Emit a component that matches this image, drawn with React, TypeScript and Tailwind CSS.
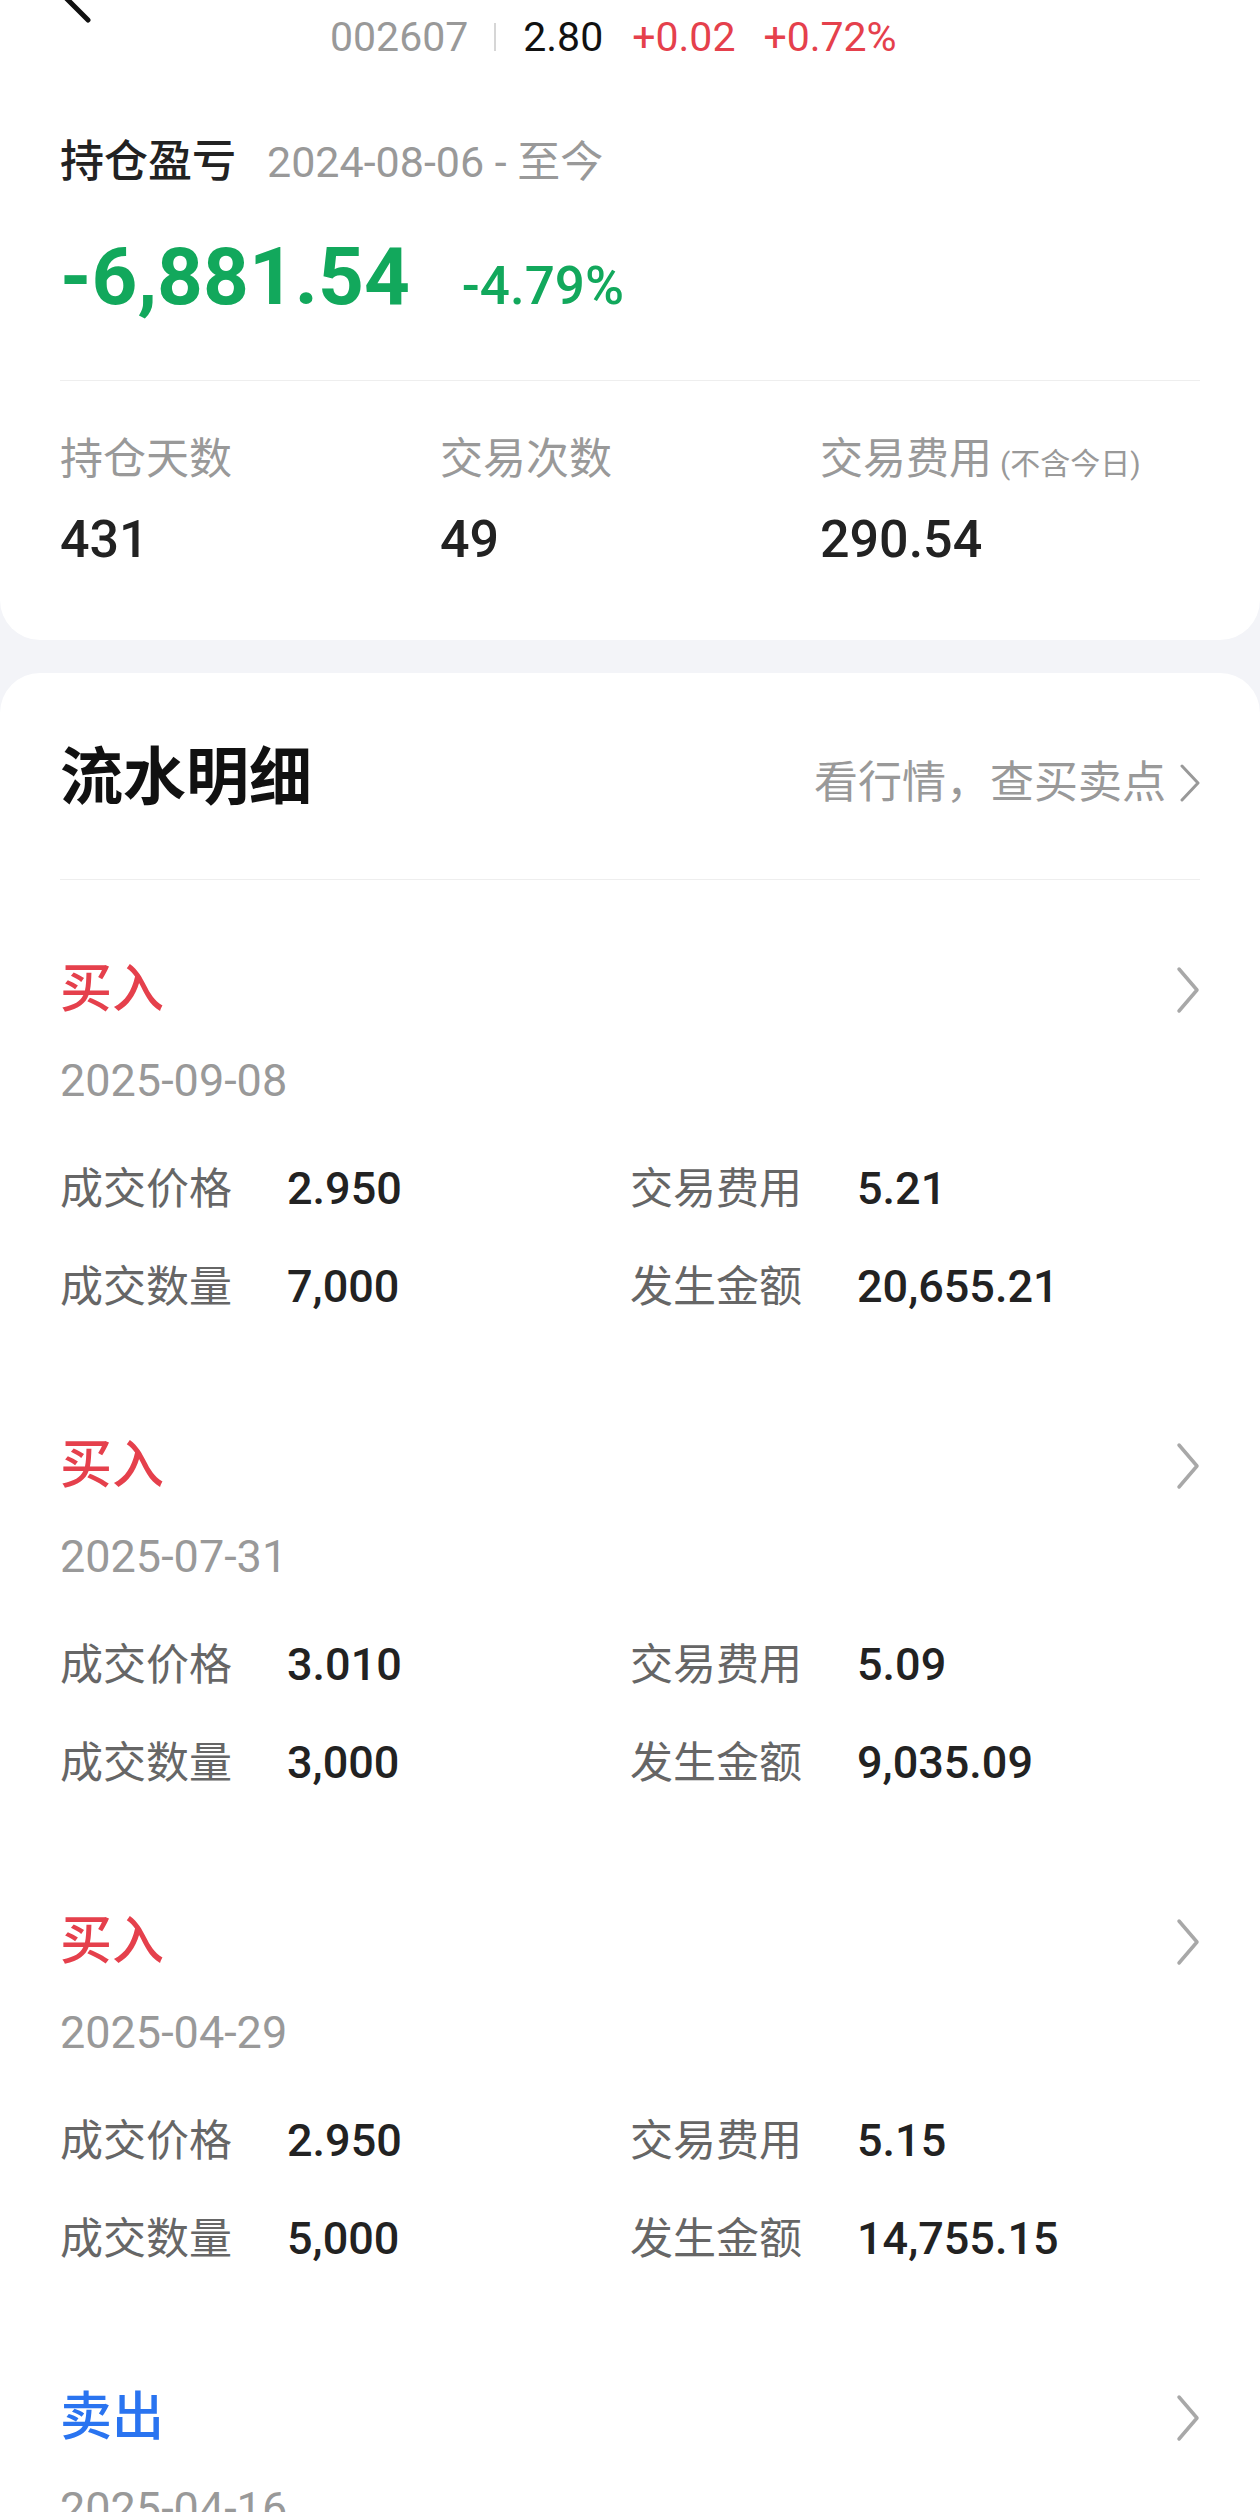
import { type FC } from 'react';

interface Entry {
  type: 'buy' | 'sell';
  date: string;
  price: string;
  fee: string;
  qty: string;
  amount: string;
}

const ENTRIES: Entry[] = [
  { type: 'buy', date: '2025-09-08', price: '2.950', fee: '5.21', qty: '7,000', amount: '20,655.21' },
  { type: 'buy', date: '2025-07-31', price: '3.010', fee: '5.09', qty: '3,000', amount: '9,035.09' },
  { type: 'buy', date: '2025-04-29', price: '2.950', fee: '5.15', qty: '5,000', amount: '14,755.15' },
  { type: 'sell', date: '2025-04-16', price: '3.120', fee: '12.48', qty: '10,000', amount: '31,187.52' },
];

const Chevron: FC<{ className?: string }> = ({ className }) => (
  <svg viewBox="0 0 24 48" className={className} fill="none" stroke="currentColor" strokeWidth="3.5" strokeLinecap="round" strokeLinejoin="round" aria-hidden="true">
    <path d="M3 3 L21 24 L3 45" />
  </svg>
);

const Cell: FC<{ label: string; value: string }> = ({ label, value }) => (
  <div className="flex items-center leading-[50px]">
    <span className="w-[227px] text-[43px] text-[#666]">{label}</span>
    <span className="text-[45px] font-medium text-[#222]">{value}</span>
  </div>
);

const EntryItem: FC<{ entry: Entry }> = ({ entry }) => (
  <div className="pb-[124px]">
    <div className="flex h-[60px] items-center justify-between">
      <span className={entry.type === 'buy' ? 'text-[52px] font-medium text-[#e5404c]' : 'text-[52px] font-medium text-[#2a74f0]'}>
        {entry.type === 'buy' ? '买入' : '卖出'}
      </span>
      <Chevron className="h-[48px] w-[24px] text-[#a8a8a8]" />
    </div>
    <div className="mt-[36px] text-[45px] leading-[50px] text-[#999]">{entry.date}</div>
    <div className="mt-[58px] grid grid-cols-2">
      <Cell label="成交价格" value={entry.price} />
      <Cell label="交易费用" value={entry.fee} />
    </div>
    <div className="mt-[48px] grid grid-cols-2">
      <Cell label="成交数量" value={entry.qty} />
      <Cell label="发生金额" value={entry.amount} />
    </div>
  </div>
);

const App: FC = () => {
  return (
    <div className="relative h-[2512px] w-[1260px] overflow-hidden bg-[#f3f4f8] font-['Roboto','Noto_Sans_CJK_SC',sans-serif]">
      {/* back arrow, mostly scrolled off */}
      <svg className="absolute left-[50px] top-0 h-[40px] w-[50px]" viewBox="0 0 50 40" fill="none" stroke="#111" strokeWidth="5" strokeLinecap="round" aria-hidden="true">
        <path d="M14 -4 L38 20" />
      </svg>

      <div className="rounded-b-[40px] bg-white px-[60px] pb-[70px]">
        <div className="flex h-[74px] items-center pl-[270px] text-[41px] leading-[50px]">
          <span className="text-[#999]">002607</span>
          <span className="ml-[26px] h-[28px] w-[2px] bg-[#d6d6d6]" />
          <span className="ml-[27px] text-[#111]">2.80</span>
          <span className="ml-[29px] text-[#e5404c]">+0.02</span>
          <span className="ml-[28px] text-[#e5404c]">+0.72%</span>
        </div>

        <div className="mt-[58px] flex items-center leading-[60px]">
          <span className="text-[44px] font-medium text-[#222]">持仓盈亏</span>
          <span className="ml-[31px] text-[43px] text-[#999]">2024-08-06 - 至今</span>
        </div>

        <div className="mt-[40px] flex h-[90px] items-baseline leading-[90px]">
          <span className="text-[80px] font-bold text-[#12a85c]">-6,881.54</span>
          <span className="ml-[52px] text-[53px] font-medium text-[#12a85c]">-4.79%</span>
        </div>

        <div className="mt-[58px] h-px bg-[#eeeeee]" />

        <div className="mt-[53px] grid grid-cols-3">
          {[
            { label: '持仓天数', value: '431' },
            { label: '交易次数', value: '49' },
            { label: '交易费用', value: '290.54', note: '(不含今日)' },
          ].map((s) => (
            <div key={s.label}>
              <div className="flex h-[50px] items-baseline leading-[50px]">
                <span className="text-[43px] text-[#999]">{s.label}</span>
                {s.note && <span className="ml-[8px] text-[30px] text-[#999]">{s.note}</span>}
              </div>
              <div className="mt-[26px] text-[52px] font-medium leading-[60px] text-[#222]">{s.value}</div>
            </div>
          ))}
        </div>
      </div>

      <div className="mt-[33px] rounded-t-[40px] bg-white px-[60px] pt-[65px]">
        <div className="flex h-[80px] items-center justify-between">
          <span className="text-[63px] font-bold text-[#111]">流水明细</span>
          <div className="mt-[10px] flex items-center">
            <span className="text-[44px] leading-[50px] text-[#999]">看行情，查买卖点</span>
            <svg viewBox="0 0 20 38" className="ml-[14px] h-[38px] w-[20px] text-[#999]" fill="none" stroke="currentColor" strokeWidth="3" strokeLinecap="round" strokeLinejoin="round" aria-hidden="true">
              <path d="M2 2 L18 19 L2 36" />
            </svg>
          </div>
        </div>

        <div className="mt-[61px] h-px bg-[#eeeeee]" />

        <div className="mt-[80px]">
          {ENTRIES.map((e) => (
            <EntryItem key={e.date} entry={e} />
          ))}
        </div>
      </div>
    </div>
  );
};

export default App;
